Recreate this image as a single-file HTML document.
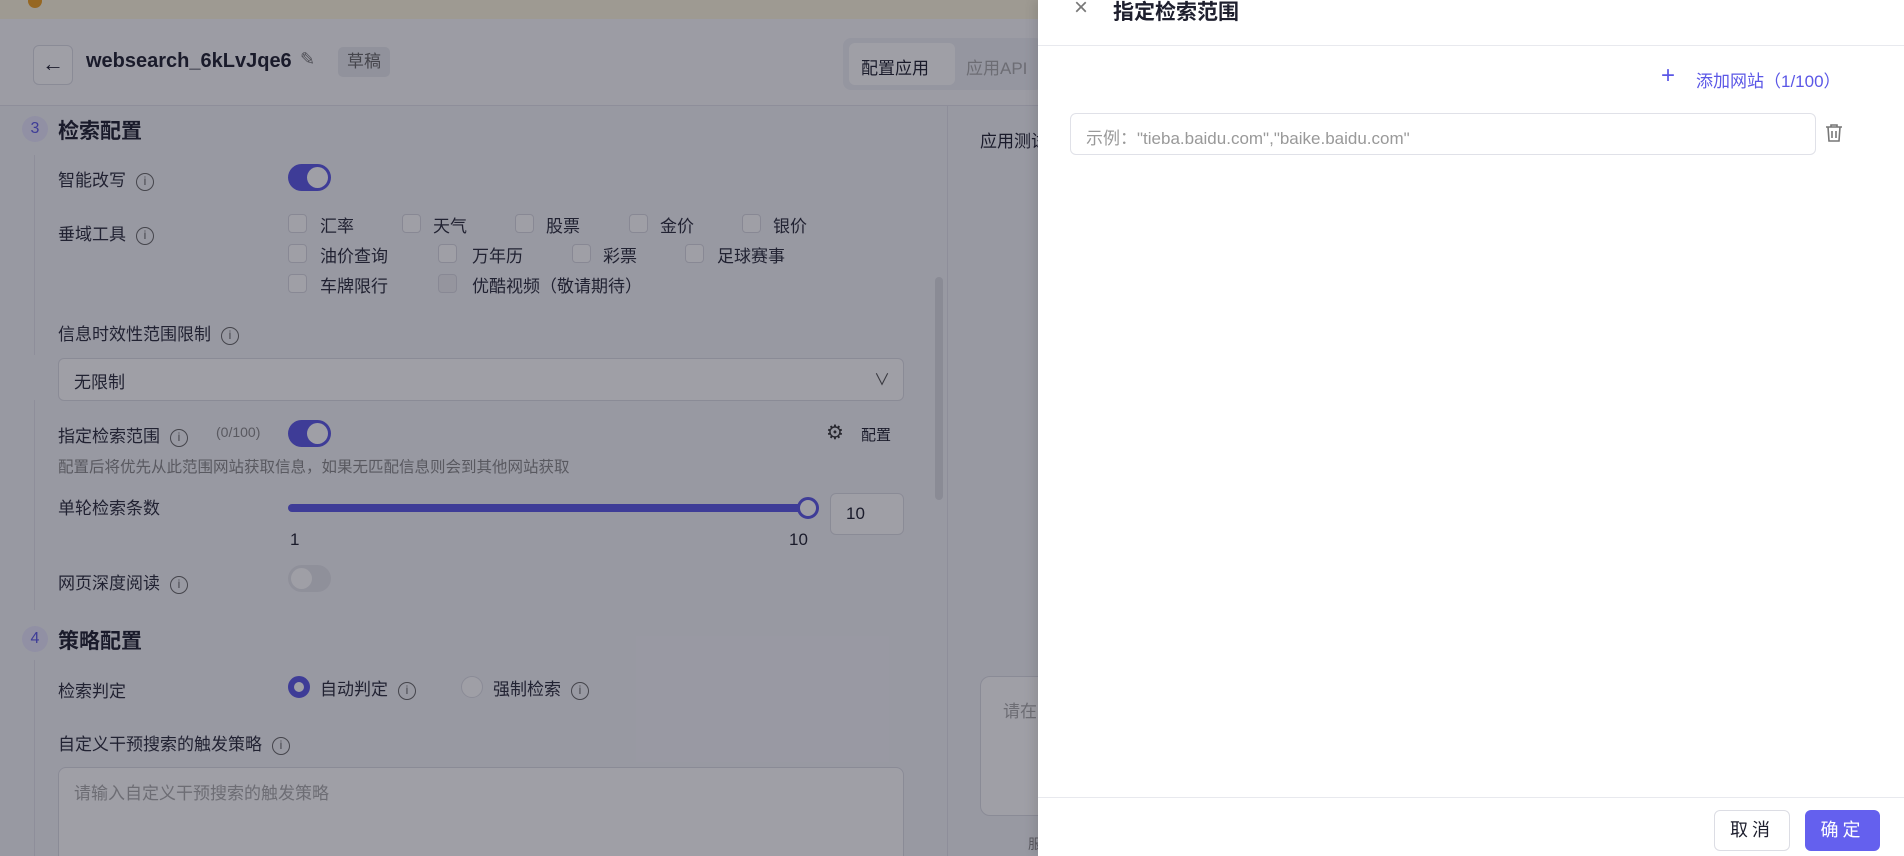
<!DOCTYPE html>
<html style="overflow:hidden;height:856px"><head><meta charset="utf-8"><style>
*{box-sizing:border-box;margin:0;padding:0}
body{width:1904px;height:856px;overflow:hidden;position:relative;background:#f4f5f9;font-family:"Liberation Sans","Noto Sans CJK SC",sans-serif;color:#1e1f2e}
.a{position:absolute;white-space:nowrap}
.lbl{font-size:17px;color:#2a2b3a}
.info{display:inline-block;width:18px;height:18px;border:1.3px solid #666;border-radius:50%;font-size:12px;line-height:15px;text-align:center;color:#666;vertical-align:middle;margin-left:10px;font-style:normal}
.cb{position:absolute;width:19px;height:19px;border:1px solid #d8d9e0;border-radius:4px;background:#fff}
.tg{position:absolute;width:43px;height:27px;border-radius:14px;background:#5b57e6}
.tg::after{content:"";position:absolute;right:3px;top:3px;width:21px;height:21px;border-radius:50%;background:#fff}
.tg.off{background:#e4e5ea}.tg.off::after{left:3px;right:auto}
.ov{position:absolute;left:0;top:0;width:1040px;height:856px;background:rgba(22,22,40,0.41)}
</style></head><body>
<div class="a" style="left:0;top:0;width:1040px;height:19px;background:#fdf6dd"></div>
<div class="a" style="left:28px;top:-6px;width:14px;height:14px;border-radius:50%;background:#f0a020"></div>
<div class="a" style="left:0;top:19px;width:1040px;height:87px;background:#fafafc;border-bottom:1px solid #e2e3ea"></div>
<div class="a" style="left:33px;top:45px;width:40px;height:40px;border:1px solid #dcdde4;border-radius:6px;background:#fff;font-size:22px;text-align:center;line-height:36px">←</div>
<div class="a" style="left:86px;top:50px;font-size:20px;font-weight:bold;color:#1e1f2e">websearch_6kLvJqe6</div>
<div class="a" style="left:300px;top:49px;font-size:18px;color:#777">✎</div>
<div class="a" style="left:338px;top:47px;width:52px;height:30px;background:#e8e9ee;border-radius:5px;font-size:17px;color:#666;text-align:center;line-height:30px">草稿</div>
<div class="a" style="left:843px;top:38px;width:200px;height:52px;background:#eef0f5;border-radius:8px"></div>
<div class="a" style="left:849px;top:43px;width:106px;height:42px;background:#fff;border-radius:6px"></div>
<div class="a" style="left:861px;top:54px;font-size:17px">配置应用</div>
<div class="a" style="left:966px;top:54px;font-size:17px;color:#aaa">应用API</div>
<div class="a" style="left:947px;top:106px;width:1px;height:750px;background:#e2e3ea"></div>
<div class="a" style="left:935px;top:277px;width:8px;height:223px;background:#dcdde3;border-radius:4px"></div>
<div class="a" style="left:22px;top:116px;width:26px;height:26px;border-radius:50%;background:#e7e6fb;color:#5b57e6;font-size:16px;text-align:center;line-height:26px">3</div>
<div class="a" style="left:58px;top:115px;font-size:21px;font-weight:bold">检索配置</div>
<div class="a" style="left:34px;top:155px;width:1px;height:200px;background:#e2e3ea"></div>
<div class="a" style="left:34px;top:400px;width:1px;height:210px;background:#e2e3ea"></div>
<div class="a" style="left:34px;top:660px;width:1px;height:200px;background:#e2e3ea"></div>
<div class="a lbl" style="left:58px;top:166px">智能改写<i class="info">i</i></div>
<div class="tg" style="left:288px;top:164px"></div>
<div class="a lbl" style="left:58px;top:220px">垂域工具<i class="info">i</i></div>
<div class="cb" style="left:288px;top:214px"></div><div class="a lbl" style="left:320px;top:212px">汇率</div>
<div class="cb" style="left:402px;top:214px"></div><div class="a lbl" style="left:433px;top:212px">天气</div>
<div class="cb" style="left:515px;top:214px"></div><div class="a lbl" style="left:546px;top:212px">股票</div>
<div class="cb" style="left:629px;top:214px"></div><div class="a lbl" style="left:660px;top:212px">金价</div>
<div class="cb" style="left:742px;top:214px"></div><div class="a lbl" style="left:773px;top:212px">银价</div>
<div class="cb" style="left:288px;top:244px"></div><div class="a lbl" style="left:320px;top:242px">油价查询</div>
<div class="cb" style="left:438px;top:244px"></div><div class="a lbl" style="left:472px;top:242px">万年历</div>
<div class="cb" style="left:572px;top:244px"></div><div class="a lbl" style="left:603px;top:242px">彩票</div>
<div class="cb" style="left:685px;top:244px"></div><div class="a lbl" style="left:717px;top:242px">足球赛事</div>
<div class="cb" style="left:288px;top:274px"></div><div class="a lbl" style="left:320px;top:272px">车牌限行</div>
<div class="cb" style="left:438px;top:274px;background:#eeeff2"></div><div class="a lbl" style="left:472px;top:272px">优酷视频（敬请期待）</div>
<div class="a lbl" style="left:58px;top:320px">信息时效性范围限制<i class="info">i</i></div>
<div class="a" style="left:58px;top:358px;width:846px;height:43px;border:1px solid #dcdde4;border-radius:6px;background:#fff"></div>
<div class="a lbl" style="left:74px;top:368px">无限制</div>
<div class="a" style="left:874px;top:366px;font-size:16px;color:#555">∨</div>
<div class="a lbl" style="left:58px;top:422px">指定检索范围<i class="info">i</i></div>
<div class="a" style="left:216px;top:424px;font-size:14px;color:#888">(0/100)</div>
<div class="tg" style="left:288px;top:420px"></div>
<div class="a" style="left:826px;top:420px;font-size:20px;color:#333">⚙</div>
<div class="a" style="left:861px;top:424px;font-size:15px">配置</div>
<div class="a" style="left:58px;top:455px;font-size:15.5px;color:#888">配置后将优先从此范围网站获取信息，如果无匹配信息则会到其他网站获取</div>
<div class="a lbl" style="left:58px;top:494px">单轮检索条数</div>
<div class="a" style="left:288px;top:504px;width:519px;height:8px;border-radius:4px;background:#5b57e6"></div>
<div class="a" style="left:797px;top:497px;width:22px;height:22px;border-radius:50%;border:3px solid #5b57e6;background:#fff"></div>
<div class="a" style="left:290px;top:530px;font-size:17px">1</div>
<div class="a" style="left:789px;top:530px;font-size:17px">10</div>
<div class="a" style="left:830px;top:493px;width:74px;height:42px;border:1px solid #dcdde4;border-radius:6px;background:#fff"></div>
<div class="a" style="left:846px;top:504px;font-size:17px">10</div>
<div class="a lbl" style="left:58px;top:569px">网页深度阅读<i class="info">i</i></div>
<div class="tg off" style="left:288px;top:565px"></div>
<div class="a" style="left:22px;top:626px;width:26px;height:26px;border-radius:50%;background:#e7e6fb;color:#5b57e6;font-size:16px;text-align:center;line-height:26px">4</div>
<div class="a" style="left:58px;top:625px;font-size:21px;font-weight:bold">策略配置</div>
<div class="a lbl" style="left:58px;top:677px">检索判定</div>
<div class="a" style="left:288px;top:676px;width:22px;height:22px;border-radius:50%;border:6px solid #5b57e6;background:#fff"></div>
<div class="a lbl" style="left:320px;top:675px">自动判定<i class="info">i</i></div>
<div class="a" style="left:461px;top:676px;width:22px;height:22px;border-radius:50%;border:1px solid #dcdde4;background:#fff"></div>
<div class="a lbl" style="left:493px;top:675px">强制检索<i class="info">i</i></div>
<div class="a lbl" style="left:58px;top:730px">自定义干预搜索的触发策略<i class="info">i</i></div>
<div class="a" style="left:58px;top:767px;width:846px;height:100px;border:1px solid #dcdde4;border-radius:8px;background:#fff"></div>
<div class="a" style="left:74px;top:779px;font-size:17px;color:#aaa">请输入自定义干预搜索的触发策略</div>
<div class="a" style="left:980px;top:127px;font-size:17px">应用测试</div>
<div class="a" style="left:980px;top:676px;width:100px;height:140px;border:1px solid #dcdde4;border-radius:10px;background:#fff"></div>
<div class="a" style="left:1003px;top:697px;font-size:17px;color:#aaa">请在</div>
<div class="a" style="left:1028px;top:834px;font-size:14px;color:#888">服</div>
<div class="ov"></div>
<div class="a" style="left:1038px;top:0;width:866px;height:856px;background:#fff;box-shadow:-4px 0 10px rgba(0,0,0,0.1)"></div>
<div class="a" style="left:1038px;top:45px;width:866px;height:1px;background:#e8e9ee"></div>
<div class="a" style="left:1074px;top:-6px;font-size:24px;color:#777">×</div>
<div class="a" style="left:1113px;top:-4px;font-size:21px;font-weight:bold;color:#1e1f2e">指定检索范围</div>
<div class="a" style="left:1661px;top:64px;font-size:24px;color:#5b57e6;line-height:24px">+</div>
<div class="a" style="left:1696px;top:67px;font-size:17px;color:#5b57e6">添加网站（1/100）</div>
<div class="a" style="left:1070px;top:113px;width:746px;height:42px;border:1px solid #e0e1e8;border-radius:6px"></div>
<div class="a" style="left:1086px;top:124px;font-size:17px;color:#999">示例："tieba.baidu.com","baike.baidu.com"</div>
<svg class="a" style="left:1825px;top:123px" width="18" height="20" viewBox="0 0 18 20" fill="none" stroke="#777" stroke-width="1.6"><path d="M1 4h16M6 4V2h6v2M3 4l1 14h10l1-14M7 8v7M11 8v7"/></svg>
<div class="a" style="left:1038px;top:797px;width:866px;height:1px;background:#e8e9ee"></div>
<div class="a" style="left:1714px;top:810px;width:76px;height:41px;border:1px solid #dcdde4;border-radius:6px;font-size:18px;text-align:center;line-height:39px;letter-spacing:4px">取消</div>
<div class="a" style="left:1805px;top:810px;width:75px;height:41px;background:#6460ee;border-radius:6px;font-size:18px;color:#fff;text-align:center;line-height:41px;letter-spacing:4px">确定</div>
</body></html>
